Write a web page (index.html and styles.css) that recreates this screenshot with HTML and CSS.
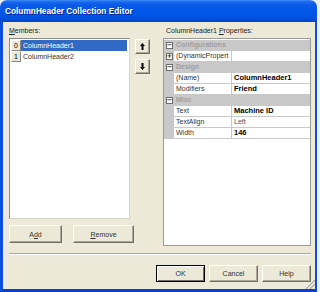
FILE: index.html
```html
<!DOCTYPE html>
<html>
<head>
<meta charset="utf-8">
<link rel="stylesheet" href="styles.css">
</head>
<body>
<div class="window">
  <div class="titlebar"><span class="title">ColumnHeader Collection Editor</span></div>
  <div class="frame">
    <div class="main">
      <div class="left">
        <div class="label"><u>M</u>embers:</div>
        <div class="listrow">
          <div class="list">
            <div class="item"><span class="idx">0</span><span class="name selected">ColumnHeader1</span></div>
            <div class="item"><span class="idx">1</span><span class="name">ColumnHeader2</span></div>
          </div>
          <div class="arrows">
            <div class="btn arrowbtn">
              <svg width="5" height="7" viewBox="0 0 5 7"><path d="M2.5 0 L5 3 L3.5 3 L3.5 7 L1.5 7 L1.5 3 L0 3 Z" fill="#000"/></svg>
            </div>
            <div class="btn arrowbtn">
              <svg width="5" height="7" viewBox="0 0 5 7"><path d="M2.5 7 L5 4 L3.5 4 L3.5 0 L1.5 0 L1.5 4 L0 4 Z" fill="#000"/></svg>
            </div>
          </div>
        </div>
        <div class="lbuttons">
          <div class="btn add">A<u>d</u>d</div>
          <div class="btn remove"><u>R</u>emove</div>
        </div>
      </div>
      <div class="right">
        <div class="label rlabel">ColumnHeader1 <u>P</u>roperties:</div>
        <div class="grid">
          <div class="row cat"><span class="margin"><span class="pm">−</span></span><span class="ctext">Configurations</span></div>
          <div class="row"><span class="margin"><span class="pm">+</span></span><span class="pname">(DynamicPropert</span><span class="pval"></span></div>
          <div class="row cat"><span class="margin"><span class="pm">−</span></span><span class="ctext">Design</span></div>
          <div class="row"><span class="margin"></span><span class="pname">(Name)</span><span class="pval b">ColumnHeader1</span></div>
          <div class="row"><span class="margin"></span><span class="pname">Modifiers</span><span class="pval b">Friend</span></div>
          <div class="row cat"><span class="margin"><span class="pm">−</span></span><span class="ctext">Misc</span></div>
          <div class="row"><span class="margin"></span><span class="pname">Text</span><span class="pval b">Machine ID</span></div>
          <div class="row"><span class="margin"></span><span class="pname">TextAlign</span><span class="pval">Left</span></div>
          <div class="row"><span class="margin"></span><span class="pname">Width</span><span class="pval b">146</span></div>
        </div>
      </div>
    </div>
    <div class="sep"></div>
    <div class="footer">
      <div class="btn fbtn default">OK</div>
      <div class="btn fbtn">Cancel</div>
      <div class="btn fbtn">Help</div>
    </div>
    <div class="grip">
      <svg width="11" height="11" viewBox="0 0 11 11">
        <path d="M10 1 L1 10 M10 5 L5 10 M10 9 L9 10" stroke="#fff" stroke-width="1"/>
        <path d="M11 2 L2 11 M11 6 L6 11" stroke="#aca899" stroke-width="1.2"/>
      </svg>
    </div>
  </div>
</div>
</body>
</html>
```

FILE: styles.css
```css
html, body {
  margin: 0;
  padding: 0;
  background: #eef0f4;
}
body {
  width: 320px;
  height: 292px;
  overflow: hidden;
  font-family: "Liberation Sans", Arial, sans-serif;
  font-size: 7px;
  color: #000;
}
.window {
  width: 317px;
  height: 292px;
  display: flex;
  flex-direction: column;
}
.titlebar {
  height: 22px;
  flex: none;
  border-radius: 7px 7px 0 0;
  background: linear-gradient(#3d8df5 0px, #1a66ee 2px, #0a5ae8 5px, #0256e9 12px, #0052e0 18px, #0045cc 22px);
  display: flex;
  align-items: center;
  padding-left: 5px;
}
.title {
  color: #fff;
  font-weight: bold;
  font-size: 8.3px;
  text-shadow: 1px 1px 0 #0a1e8a;
}
.frame {
  flex: 1;
  position: relative;
  background: #ece9d8;
  border-left: 3px solid #0a4ee0;
  border-right: 2px solid #0a4ee0;
  border-bottom: 3px solid #0a3fd0;
  display: flex;
  flex-direction: column;
  padding: 4px 4px 0 6px;
}
.main {
  display: flex;
  gap: 13px;
}
.left {
  width: 141px;
  display: flex;
  flex-direction: column;
}
.label {
  height: 10px;
  line-height: 10px;
  margin-bottom: 2px;
  color: #222;
}
.rlabel {
  padding-left: 3px;
}
.listrow {
  display: flex;
  gap: 5px;
}
.list {
  width: 121px;
  height: 181px;
  box-sizing: border-box;
  background: #fff;
  border: 1px solid #8a8a86;
  border-right-color: #d8d6cc;
  border-bottom-color: #d8d6cc;
  padding: 1px 1px 0 1px;
}
.item {
  display: flex;
  height: 11px;
}
.idx {
  width: 10px;
  height: 11px;
  box-sizing: border-box;
  background: #ece9d8;
  border: 1px solid #fff;
  border-right-color: #8a887c;
  border-bottom-color: #8a887c;
  text-align: center;
  line-height: 9px;
  font-size: 7px;
}
.name {
  flex: 1;
  padding-left: 2px;
  line-height: 11px;
  color: #333;
}
.name.selected {
  background: #316ac5;
  color: #fff;
  margin-right: 1px;
}
.arrows {
  display: flex;
  flex-direction: column;
  gap: 5px;
  padding-top: 1px;
}
.btn {
  box-sizing: border-box;
  background: #ece9d8;
  border: 1px solid #fff;
  border-right-color: #716f64;
  border-bottom-color: #716f64;
  box-shadow: inset -1px -1px 0 #aca899;
  display: flex;
  align-items: center;
  justify-content: center;
  color: #333;
}
.arrowbtn {
  width: 15px;
  height: 15px;
}
.lbuttons {
  margin-top: 6px;
  display: flex;
  gap: 11px;
}
.add {
  width: 53px;
  height: 18px;
}
.remove {
  width: 61px;
  height: 18px;
}
.right {
  width: 148px;
  display: flex;
  flex-direction: column;
}
.grid {
  height: 208px;
  box-sizing: border-box;
  background: #fff;
  border: 1px solid #9a9a96;
  padding-top: 1px;
}
.row {
  display: flex;
  height: 11px;
  box-sizing: border-box;
  border-bottom: 1px solid #c8c8c8;
  line-height: 10px;
}
.margin {
  width: 10px;
  flex: none;
  background: #c8c8c8;
  display: flex;
  align-items: center;
  justify-content: center;
}
.pm {
  width: 7px;
  height: 7px;
  box-sizing: border-box;
  border: 1px solid #6e6e6e;
  background: #fff;
  font-size: 7px;
  line-height: 5px;
  text-align: center;
  color: #333;
  font-family: "DejaVu Sans", sans-serif;
  font-weight: bold;
}
.cat {
  background: #c8c8c8;
}
.ctext {
  padding-left: 2px;
  font-weight: bold;
  color: #a0a0a0;
}
.pname {
  width: 58px;
  flex: none;
  padding-left: 2px;
  box-sizing: border-box;
  overflow: hidden;
  white-space: nowrap;
  color: #333;
  border-right: 1px solid #c8c8c8;
}
.pval {
  flex: 1;
  padding-left: 2px;
  color: #555;
  white-space: nowrap;
}
.pval.b {
  font-weight: bold;
  color: #000;
  font-size: 7.5px;
}
.sep {
  margin-top: 7px;
  height: 0;
  border-top: 1px solid #aca899;
  border-bottom: 1px solid #fff;
}
.footer {
  margin-top: 10px;
  display: flex;
  justify-content: flex-end;
  gap: 4px;
}
.fbtn {
  width: 49px;
  height: 17px;
}
.fbtn.default {
  border: 1px solid #000;
  box-shadow: inset 1px 1px 0 #fff, inset -1px -1px 0 #716f64;
}
.grip {
  position: absolute;
  right: 0;
  bottom: 0;
  width: 11px;
  height: 11px;
}
```
